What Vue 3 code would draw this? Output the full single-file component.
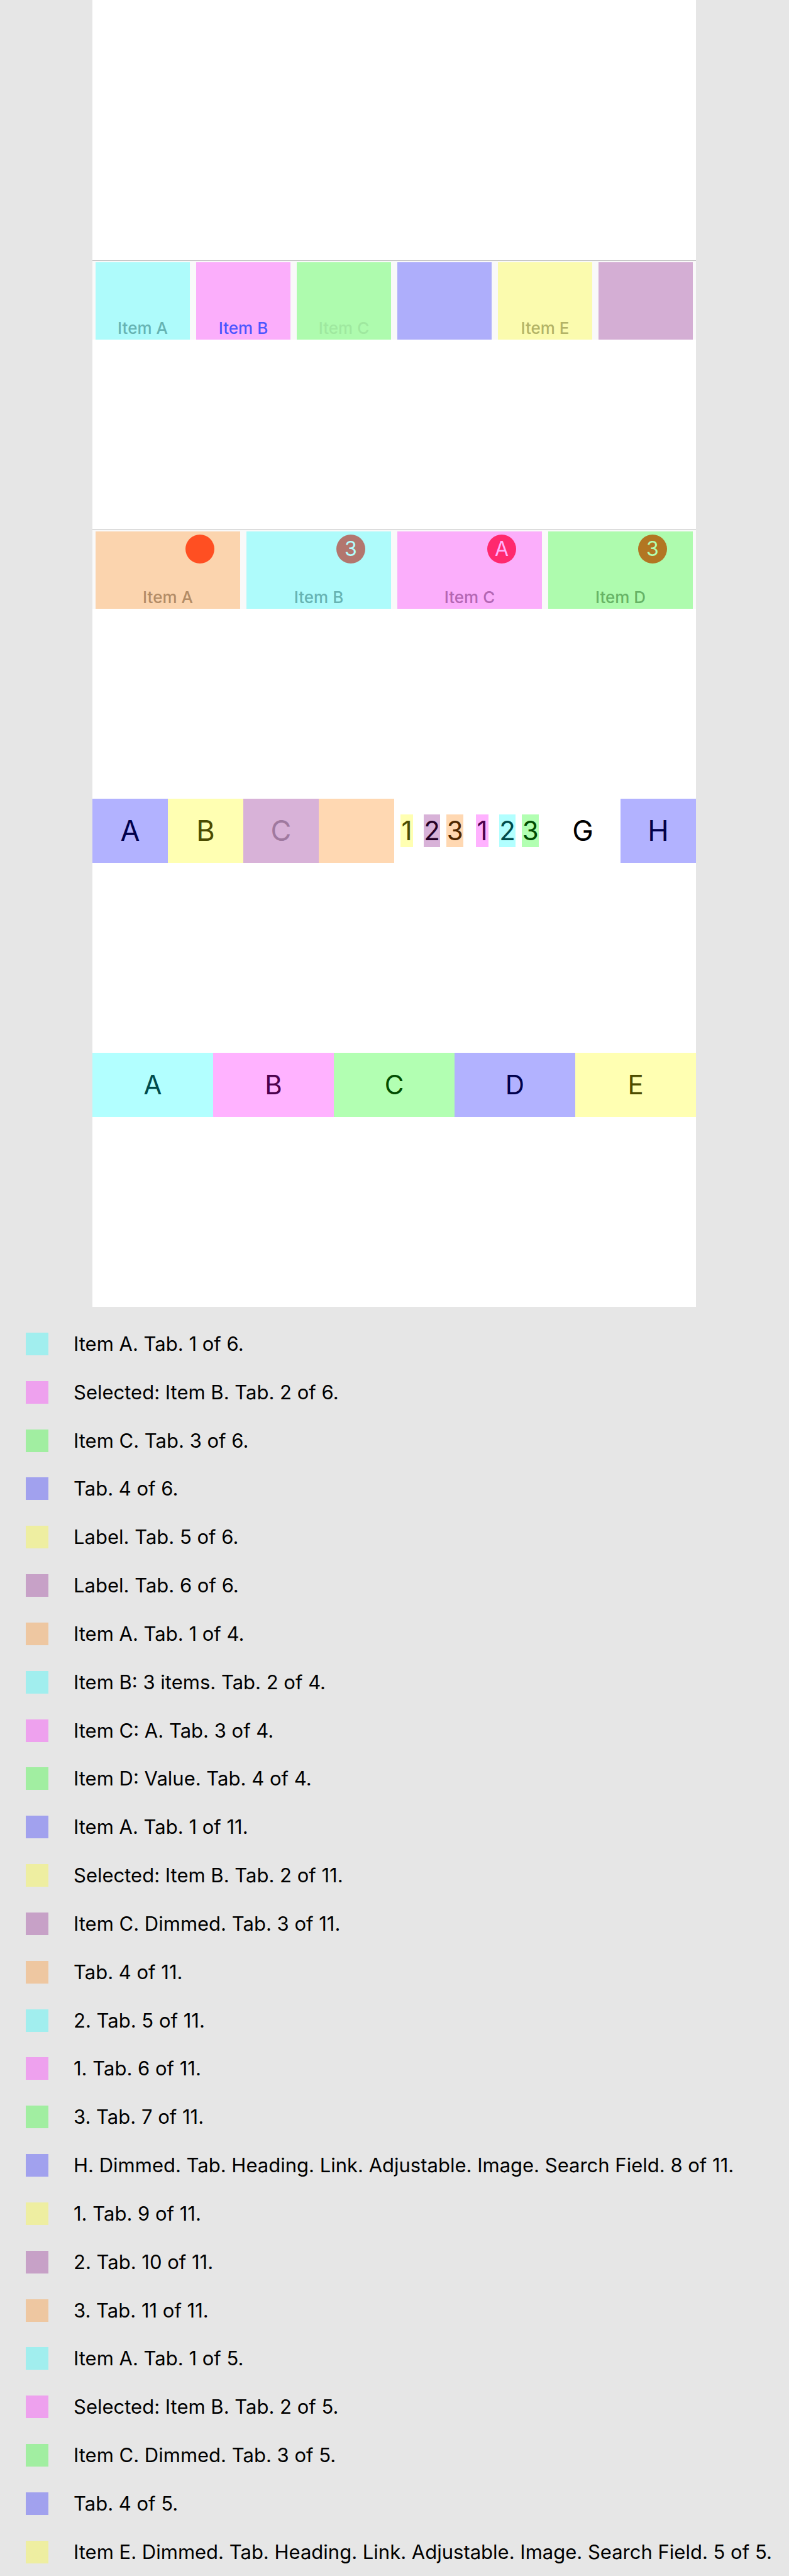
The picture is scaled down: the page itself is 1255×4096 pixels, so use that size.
<script setup>
const iconTabs = [
  { label: 'Item A', tint: 'cyan' },
  { label: 'Item B', tint: 'magenta', state: 'selected' },
  { label: 'Item C', tint: 'green', state: 'dimmed' },
  { label: '', tint: 'blue' },
  { label: 'Item E', tint: 'yellow' },
  { label: '', tint: 'purple' },
]

const badgeTabs = [
  { label: 'Item A', tint: 'orange', badge: '' },
  { label: 'Item B', tint: 'cyan', badge: '3' },
  { label: 'Item C', tint: 'magenta', badge: 'A' },
  { label: 'Item D', tint: 'green', badge: '3' },
]

const mixedTabs = [
  { label: 'A', tint: 'blue' },
  { label: 'B', tint: 'yellow' },
  { label: 'C', tint: 'purple', state: 'dimmed' },
  { label: '', tint: 'orange' },
  { group: [['1', 'yellow'], ['2', 'purple'], ['3', 'orange']] },
  { group: [['1', 'magenta'], ['2', 'cyan'], ['3', 'green']] },
  { label: 'G', tint: 'plain' },
  { label: 'H', tint: 'blue' },
]

const simpleTabs = [
  { label: 'A', tint: 'cyan' },
  { label: 'B', tint: 'magenta' },
  { label: 'C', tint: 'green' },
  { label: 'D', tint: 'blue' },
  { label: 'E', tint: 'yellow' },
]

const legend = [
  ['cyan', 'Item A. Tab. 1 of 6.'],
  ['magenta', 'Selected: Item B. Tab. 2 of 6.'],
  ['green', 'Item C. Tab. 3 of 6.'],
  ['blue', 'Tab. 4 of 6.'],
  ['yellow', 'Label. Tab. 5 of 6.'],
  ['purple', 'Label. Tab. 6 of 6.'],
  ['orange', 'Item A. Tab. 1 of 4.'],
  ['cyan', 'Item B: 3 items. Tab. 2 of 4.'],
  ['magenta', 'Item C: A. Tab. 3 of 4.'],
  ['green', 'Item D: Value. Tab. 4 of 4.'],
  ['blue', 'Item A. Tab. 1 of 11.'],
  ['yellow', 'Selected: Item B. Tab. 2 of 11.'],
  ['purple', 'Item C. Dimmed. Tab. 3 of 11.'],
  ['orange', 'Tab. 4 of 11.'],
  ['cyan', '2. Tab. 5 of 11.'],
  ['magenta', '1. Tab. 6 of 11.'],
  ['green', '3. Tab. 7 of 11.'],
  ['blue', 'H. Dimmed. Tab. Heading. Link. Adjustable. Image. Search Field. 8 of 11.'],
  ['yellow', '1. Tab. 9 of 11.'],
  ['purple', '2. Tab. 10 of 11.'],
  ['orange', '3. Tab. 11 of 11.'],
  ['cyan', 'Item A. Tab. 1 of 5.'],
  ['magenta', 'Selected: Item B. Tab. 2 of 5.'],
  ['green', 'Item C. Dimmed. Tab. 3 of 5.'],
  ['blue', 'Tab. 4 of 5.'],
  ['yellow', 'Item E. Dimmed. Tab. Heading. Link. Adjustable. Image. Search Field. 5 of 5.'],
]
</script>

<template>
  <div class="page">
    <main class="screen">
      <nav class="tab-bar">
        <button
          v-for="(tab, i) in iconTabs"
          :key="i"
          type="button"
          class="bar-item"
          :class="[tab.tint, tab.state]"
        >{{ tab.label }}</button>
      </nav>

      <nav class="tab-bar">
        <button
          v-for="tab in badgeTabs"
          :key="tab.label"
          type="button"
          class="bar-item"
          :class="tab.tint"
        >
          <span class="badge">{{ tab.badge }}</span>
          {{ tab.label }}
        </button>
      </nav>

      <nav class="strip large">
        <template v-for="(tab, i) in mixedTabs" :key="i">
          <div v-if="tab.group" class="group">
            <button
              v-for="[digit, tint] in tab.group"
              :key="digit"
              type="button"
              class="digit"
              :class="tint"
            >{{ digit }}</button>
          </div>
          <button v-else type="button" class="cell" :class="[tab.tint, tab.state]">{{ tab.label }}</button>
        </template>
      </nav>

      <nav class="strip">
        <button
          v-for="tab in simpleTabs"
          :key="tab.label"
          type="button"
          class="cell"
          :class="tab.tint"
        >{{ tab.label }}</button>
      </nav>
    </main>

    <ul class="legend">
      <li v-for="([tint, text], i) in legend" :key="i">
        <span class="swatch" :class="tint"></span>
        <span>{{ text }}</span>
      </li>
    </ul>
  </div>
</template>

<style>
body {
  margin: 0;
  background: #e6e6e6;
}
</style>

<style scoped>
.page {
  display: flex;
  flex-direction: column;
  box-sizing: border-box;
  min-height: 100vh;
  background: #e6e6e6;
  color: #000;
  font-family: Inter, "Liberation Sans", sans-serif;
}

button {
  margin: 0;
  padding: 0;
  border: 0;
  border-radius: 0;
  background: none;
  font: inherit;
  text-align: center;
}

.screen {
  display: flex;
  flex-direction: column;
  gap: 302px;
  margin: 0 148px 0 147px;
  padding: 414px 0 302px;
  background: #fff;
}

.tab-bar {
  display: flex;
  gap: 10px;
  padding: 2px 5px 0;
  border-top: 1px solid #b2b2b2;
  background: #f9f9f9;
}

.bar-item {
  position: relative;
  display: flex;
  flex: 1 1 0;
  align-items: flex-end;
  justify-content: center;
  box-sizing: border-box;
  height: 123px;
  padding-bottom: 3px;
  font-size: 26px;
  font-weight: 500;
  line-height: 30px;
}

.bar-item.cyan { background: #aefbfb; color: #66b3b3; }
.bar-item.magenta { background: #fbaefb; color: #b366b3; }
.bar-item.green { background: #aefbae; color: #66b366; }
.bar-item.blue { background: #aeaefb; color: #6666b3; }
.bar-item.yellow { background: #fbfbae; color: #b3b366; }
.bar-item.purple { background: #d4aed4; color: #8c668c; }
.bar-item.orange { background: #fbd4ae; color: #b38c66; }
.bar-item.selected { color: #4c55ff; }
.bar-item.dimmed { color: #9fe89f; }

.badge {
  position: absolute;
  top: 5px;
  right: 41px;
  width: 46px;
  height: 46px;
  border-radius: 50%;
  font-size: 32px;
  font-weight: 400;
  line-height: 46px;
}

.orange .badge { background: #ff4f22; }
.cyan .badge { background: #b2766e; color: #b2ffff; }
.magenta .badge { background: #ff296e; color: #ffb2ff; }
.green .badge { background: #b27622; color: #b2ffb2; }

.strip {
  display: grid;
  grid-auto-flow: column;
  grid-auto-columns: minmax(0, 1fr);
  height: 102px;
  font-size: 42px;
  line-height: 52px;
}

.large .cell {
  font-size: 45px;
}

.group {
  display: grid;
  grid-template-columns: repeat(3, minmax(0, 1fr));
  gap: 10px;
  align-items: center;
  padding: 0 10px;
}

.digit {
  display: flex;
  justify-content: center;
  height: 52px;
}

.digit:first-child {
  width: 20px;
}

.strip .cyan { background: #b2ffff; color: #004c4c; }
.strip .magenta { background: #ffb2ff; color: #4c004c; }
.strip .green { background: #b2ffb2; color: #004c00; }
.strip .blue { background: #b2b2ff; color: #00004c; }
.strip .yellow { background: #ffffb2; color: #4c4c00; }
.strip .purple { background: #d8b2d8; color: #260026; }
.strip .orange { background: #ffd8b2; color: #4c2600; }
.strip .plain { color: #000; }
.strip .dimmed { color: #9f799f; }

.legend {
  display: flex;
  flex: 1;
  flex-direction: column;
  justify-content: space-between;
  margin: 0;
  padding: 41px 0 20px 41px;
  list-style: none;
  font-size: 31px;
  line-height: 36px;
}

.legend li {
  display: flex;
  gap: 40px;
}

.swatch {
  flex: none;
  width: 36px;
  height: 36px;
}

.swatch.cyan { background: #a1eeee; }
.swatch.magenta { background: #eea1ee; }
.swatch.green { background: #a1eea1; }
.swatch.blue { background: #a1a1ee; }
.swatch.yellow { background: #eeeea1; }
.swatch.purple { background: #c7a1c7; }
.swatch.orange { background: #eec7a1; }
</style>
